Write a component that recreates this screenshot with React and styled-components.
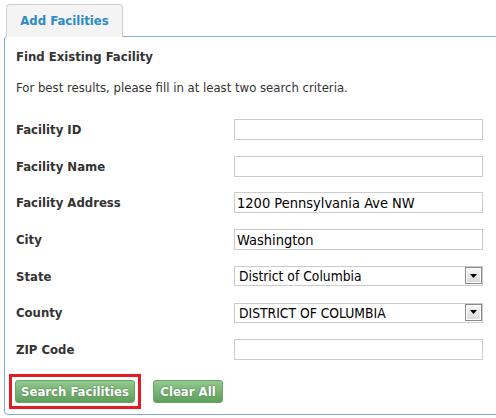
import React from "react";
import styled, { createGlobalStyle } from "styled-components";

const GlobalStyle = createGlobalStyle`
  html, body {
    margin: 0;
    padding: 0;
    background: #ffffff;
    overflow: hidden;
  }
  body {
    font-family: "DejaVu Sans Condensed", "DejaVu Sans", sans-serif;
    font-size: 13px;
    color: #333333;
  }
`;

const Page = styled.div`
  padding: 4px 0 0 4px;
  width: 560px;
`;

const TabBar = styled.div`
  display: flex;
  padding-left: 2px;
`;

const Tab = styled.div`
  position: relative;
  z-index: 1;
  box-sizing: border-box;
  width: 117px;
  height: 33px;
  margin-bottom: -1px;
  border: 1px solid #cfcfcf;
  border-bottom: 0;
  border-radius: 4px 4px 0 0;
  background: #f4f4f4;
  color: #2a8bc6;
  font-weight: bold;
  font-size: 13px;
  display: flex;
  align-items: center;
  justify-content: center;
  padding-bottom: 1px;
`;

const Panel = styled.div`
  box-sizing: border-box;
  width: 540px;
  height: 379px;
  border: 1px solid #82aad5;
  border-radius: 3px 0 0 4px;
  padding: 12px 0 0 11px;
  display: flex;
  flex-direction: column;
`;

const Heading = styled.h3`
  margin: 0;
  font-size: 13px;
  line-height: 16px;
  font-weight: bold;
  color: #333333;
`;

const Intro = styled.p`
  margin: 15px 0 0;
  line-height: 16px;
`;

const Form = styled.div`
  margin-top: 23px;
  display: grid;
  grid-template-columns: 218px 249px;
  grid-auto-rows: 21px;
  row-gap: 15.7px;
  align-items: center;
`;

const Label = styled.label`
  font-weight: bold;
  color: #333333;
`;

const TextInput = styled.input`
  box-sizing: border-box;
  width: 249px;
  height: 21px;
  margin: 0;
  padding: 0 2px;
  border: 1px solid #cccccc;
  font-family: inherit;
  font-size: 14.5px;
  color: #000000;
  outline: none;
`;

const SelectWrap = styled.div`
  position: relative;
  width: 249px;
  height: 20px;
`;

const Select = styled.select`
  box-sizing: border-box;
  width: 100%;
  height: 100%;
  margin: 0;
  padding: 0 0 0 4px;
  border: 1px solid #cccccc;
  border-radius: 0;
  background: #ffffff;
  appearance: none;
  font-family: inherit;
  font-size: 13.75px;
  color: #000000;
  outline: none;
`;

const Arrow = styled.span`
  position: absolute;
  right: 1px;
  top: 1px;
  box-sizing: border-box;
  width: 17px;
  height: 17px;
  border: 1px solid #8a8a8a;
  box-shadow: inset 0 0 0 1px #ffffff;
  background: linear-gradient(#f8f8f8, #d8d8d8);
  display: flex;
  align-items: center;
  justify-content: center;
  pointer-events: none;
`;

const ButtonRow = styled.div`
  margin-top: 20px;
  display: flex;
  align-items: center;
  gap: 18px;
`;

const FocusFrame = styled.span`
  display: inline-flex;
  margin: -6px -6px -6px -7px;
  padding: 3px;
  border: 3px solid #e31b23;
`;

const Button = styled.button`
  box-sizing: border-box;
  height: 23px;
  width: ${(p) => p.$w}px;
  margin: 0;
  padding: 0;
  border: 1px solid #6aa466;
  border-radius: 3px;
  background: linear-gradient(#93c98f, #5f9f5c);
  color: #ffffff;
  font-family: inherit;
  font-size: 13px;
  font-weight: bold;
  text-shadow: 0 0 2px rgba(40, 80, 40, 0.6);
  outline: none;
  cursor: pointer;
`;

const fields = [
  { label: "Facility ID", value: "" },
  { label: "Facility Name", value: "" },
  { label: "Facility Address", value: "1200 Pennsylvania Ave NW" },
  { label: "City", value: "Washington" },
  { label: "State", select: ["District of Columbia"] },
  { label: "County", select: ["DISTRICT OF COLUMBIA"] },
  { label: "ZIP Code", value: "" },
];

export default function App() {
  return (
    <>
      <GlobalStyle />
      <Page>
        <TabBar>
          <Tab>Add Facilities</Tab>
        </TabBar>
        <Panel>
          <Heading>Find Existing Facility</Heading>
          <Intro>For best results, please fill in at least two search criteria.</Intro>
          <Form>
            {fields.map((f) => (
              <React.Fragment key={f.label}>
                <Label>{f.label}</Label>
                {f.select ? (
                  <SelectWrap>
                    <Select defaultValue={f.select[0]}>
                      {f.select.map((o) => (
                        <option key={o}>{o}</option>
                      ))}
                    </Select>
                    <Arrow>
                      <svg width="7" height="4" viewBox="0 0 7 4">
                        <path d="M0 0h7L3.5 4z" fill="#000" />
                      </svg>
                    </Arrow>
                  </SelectWrap>
                ) : (
                  <TextInput defaultValue={f.value} />
                )}
              </React.Fragment>
            ))}
          </Form>
          <ButtonRow>
            <FocusFrame>
              <Button $w={120}>Search Facilities</Button>
            </FocusFrame>
            <Button $w={70}>Clear All</Button>
          </ButtonRow>
        </Panel>
      </Page>
    </>
  );
}
